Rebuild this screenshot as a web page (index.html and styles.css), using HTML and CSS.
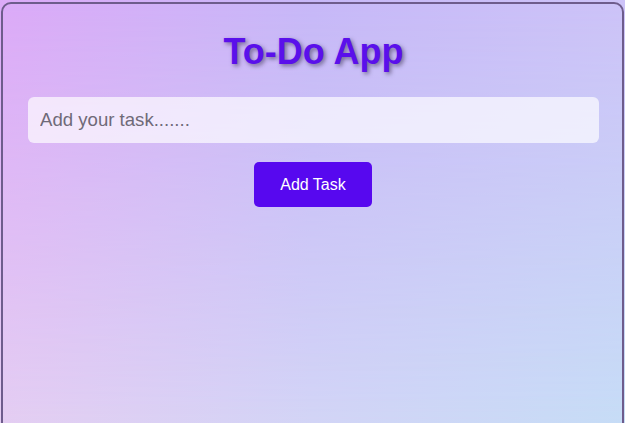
FILE: index.html
```html
<!DOCTYPE html>
<html lang="en">
<head>
<meta charset="utf-8">
<title>To-Do App</title>
<link rel="stylesheet" href="styles.css">
</head>
<body>
<div class="card">
  <h1 class="title">To-Do App</h1>
  <input class="task-input" type="text" placeholder="Add your task.......">
  <div class="actions">
    <button class="add-btn" type="button">Add Task</button>
  </div>
</div>
</body>
</html>
```

FILE: styles.css
```css
html, body {
  margin: 0;
  padding: 0;
  height: 100%;
}

body {
  position: relative;
  font-family: "Liberation Sans", Arial, sans-serif;
  background: linear-gradient(to right, #dcaaf8 0%, #c7b8f8 50%, #cdc3f8 100%);
  overflow: hidden;
}

body::before {
  content: "";
  position: absolute;
  inset: 0;
  background: linear-gradient(to right, #e4cdf2 0%, #d2d4f6 50%, #c6dcf6 100%);
  -webkit-mask-image: linear-gradient(to bottom, transparent 0%, #000 100%);
  mask-image: linear-gradient(to bottom, transparent 0%, #000 100%);
  pointer-events: none;
}

.card {
  position: relative;
  margin: 2px 1px 0 1px;
  min-height: 600px;
  border: 2px solid #6e5c8c;
  border-radius: 10px;
  padding: 27px 23px 24px 25px;
  box-sizing: border-box;
  display: flex;
  flex-direction: column;
}

.title {
  margin: 0 0 24px;
  font-size: 36px;
  font-weight: bold;
  text-align: center;
  color: #5a10eb;
  text-shadow: 2px 2px 4px rgba(60,50,80,0.6);
}

.task-input {
  height: 46px;
  box-sizing: border-box;
  border: none;
  border-radius: 6px;
  padding: 0 12px;
  font-family: "Liberation Sans", Arial, sans-serif;
  font-size: 18.6px;
  background: rgba(255,255,255,0.68);
  color: #333;
  outline: none;
}

.task-input::placeholder {
  color: #6f6a78;
}

.actions {
  display: flex;
  justify-content: center;
  margin-top: 19px;
  padding-right: 1px;
}

.add-btn {
  width: 118px;
  height: 45px;
  border: none;
  border-radius: 5px;
  background: #5708ef;
  color: #fff;
  font-family: "Liberation Sans", Arial, sans-serif;
  font-size: 16px;
  cursor: pointer;
}
```
